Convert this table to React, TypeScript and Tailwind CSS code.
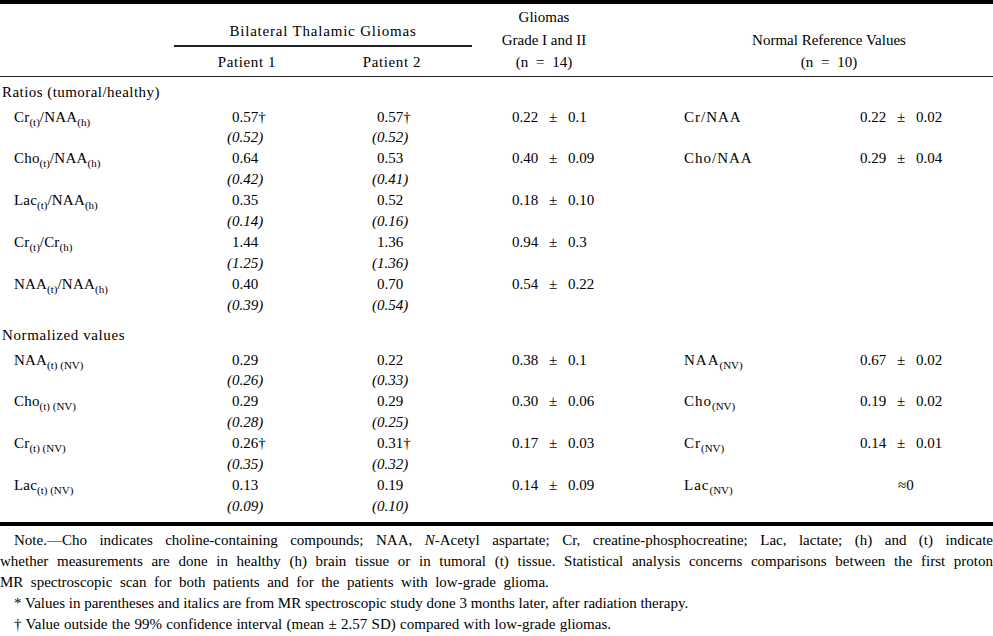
import React from "react";

const Sub = ({ children }: { children: React.ReactNode }) => (
  <sub className="text-[11px] bottom-[-4px] tracking-normal">{children}</sub>
);

type Row = {
  label: React.ReactNode;
  p1: string;
  p1i: string;
  p2: string;
  p2i: string;
  g: string;
  nl?: React.ReactNode;
  nv?: string;
  nvApprox?: boolean;
};

const ratios: Row[] = [
  {
    label: (
      <>
        Cr<Sub>(t)</Sub>/NAA<Sub>(h)</Sub>
      </>
    ),
    p1: "0.57†",
    p1i: "(0.52)",
    p2: "0.57†",
    p2i: "(0.52)",
    g: "0.22 ± 0.1",
    nl: "Cr/NAA",
    nv: "0.22 ± 0.02",
  },
  {
    label: (
      <>
        Cho<Sub>(t)</Sub>/NAA<Sub>(h)</Sub>
      </>
    ),
    p1: "0.64",
    p1i: "(0.42)",
    p2: "0.53",
    p2i: "(0.41)",
    g: "0.40 ± 0.09",
    nl: "Cho/NAA",
    nv: "0.29 ± 0.04",
  },
  {
    label: (
      <>
        Lac<Sub>(t)</Sub>/NAA<Sub>(h)</Sub>
      </>
    ),
    p1: "0.35",
    p1i: "(0.14)",
    p2: "0.52",
    p2i: "(0.16)",
    g: "0.18 ± 0.10",
  },
  {
    label: (
      <>
        Cr<Sub>(t)</Sub>/Cr<Sub>(h)</Sub>
      </>
    ),
    p1: "1.44",
    p1i: "(1.25)",
    p2: "1.36",
    p2i: "(1.36)",
    g: "0.94 ± 0.3",
  },
  {
    label: (
      <>
        NAA<Sub>(t)</Sub>/NAA<Sub>(h)</Sub>
      </>
    ),
    p1: "0.40",
    p1i: "(0.39)",
    p2: "0.70",
    p2i: "(0.54)",
    g: "0.54 ± 0.22",
  },
];

const normalized: Row[] = [
  {
    label: (
      <>
        NAA<Sub>(t) (NV)</Sub>
      </>
    ),
    p1: "0.29",
    p1i: "(0.26)",
    p2: "0.22",
    p2i: "(0.33)",
    g: "0.38 ± 0.1",
    nl: (
      <>
        NAA<Sub>(NV)</Sub>
      </>
    ),
    nv: "0.67 ± 0.02",
  },
  {
    label: (
      <>
        Cho<Sub>(t) (NV)</Sub>
      </>
    ),
    p1: "0.29",
    p1i: "(0.28)",
    p2: "0.29",
    p2i: "(0.25)",
    g: "0.30 ± 0.06",
    nl: (
      <>
        Cho<Sub>(NV)</Sub>
      </>
    ),
    nv: "0.19 ± 0.02",
  },
  {
    label: (
      <>
        Cr<Sub>(t) (NV)</Sub>
      </>
    ),
    p1: "0.26†",
    p1i: "(0.35)",
    p2: "0.31†",
    p2i: "(0.32)",
    g: "0.17 ± 0.03",
    nl: (
      <>
        Cr<Sub>(NV)</Sub>
      </>
    ),
    nv: "0.14 ± 0.01",
  },
  {
    label: (
      <>
        Lac<Sub>(t) (NV)</Sub>
      </>
    ),
    p1: "0.13",
    p1i: "(0.09)",
    p2: "0.19",
    p2i: "(0.10)",
    g: "0.14 ± 0.09",
    nl: (
      <>
        Lac<Sub>(NV)</Sub>
      </>
    ),
    nv: "≈0",
    nvApprox: true,
  },
];

function DataRow({ r }: { r: Row }) {
  return (
    <div className="flex leading-[20.9px]">
      <div className="w-[174px] pl-[14px] whitespace-nowrap tracking-[0.2px]">{r.label}</div>
      <div className="w-[148px] pl-[53px]">
        <div className="pl-[5px]">{r.p1}</div>
        <div className="italic">{r.p1i}</div>
      </div>
      <div className="w-[150px] pl-[50px]">
        <div className="pl-[5px]">{r.p2}</div>
        <div className="italic">{r.p2i}</div>
      </div>
      <div className="w-[212px] pl-[40px] whitespace-nowrap [word-spacing:7px]">{r.g}</div>
      <div className="w-[176px] whitespace-nowrap tracking-[1px]">{r.nl}</div>
      <div className={"flex-1 whitespace-nowrap [word-spacing:7px] " + (r.nvApprox ? "pl-[38px]" : "")}>{r.nv}</div>
    </div>
  );
}

export default function App() {
  return (
    <div
      className="w-[993px] h-[636px] bg-white text-black text-[15px] overflow-hidden"
      style={{ fontFamily: '"Liberation Serif", "Times New Roman", serif' }}
    >
      <div className="h-[4px] bg-black" />
      {/* header */}
      <div className="flex border-b border-[#222] pt-[2px] pb-[2px]">
        <div className="w-[174px]" />
        <div className="w-[298px] flex flex-col">
          <div className="text-center leading-[22px] pt-[14px] tracking-[0.8px]">Bilateral Thalamic Gliomas</div>
          <div className="h-[2px] bg-[#222] mt-[3px]" />
          <div className="flex leading-[22px] mt-[4px] tracking-[0.6px]">
            <div className="w-[146px] text-center">Patient 1</div>
            <div className="w-[144px] text-center">Patient 2</div>
          </div>
        </div>
        <div className="w-[144px] text-center leading-[22.5px]">
          <div>Gliomas</div>
          <div>Grade I and II</div>
          <div className="[word-spacing:4px]">(n = 14)</div>
        </div>
        <div className="flex-1 pl-[49px] flex flex-col justify-end text-center leading-[22.5px]">
          <div>Normal Reference Values</div>
          <div className="[word-spacing:4px]">(n = 10)</div>
        </div>
      </div>
      {/* body */}
      <div className="pt-[5px] leading-[21px] pl-[2px] tracking-[0.45px]">Ratios (tumoral/healthy)</div>
      <div className="flex flex-col mt-[4px]">
        {ratios.map((r, i) => (
          <DataRow key={i} r={r} />
        ))}
      </div>
      <div className="mt-[9px] leading-[21px] pl-[2px] tracking-[0.6px]">Normalized values</div>
      <div className="flex flex-col mt-[4px]">
        {normalized.map((r, i) => (
          <DataRow key={i} r={r} />
        ))}
      </div>
      <div className="h-[4px] bg-black mt-[5px]" />
      {/* notes */}
      <div className="mt-[4px] leading-[21px]">
        <div className="pl-[14px] text-justify [text-align-last:justify] whitespace-nowrap">
          Note.—Cho indicates choline-containing compounds; NAA, <i>N</i>-Acetyl aspartate; Cr, creatine-phosphocreatine; Lac, lactate; (h) and (t) indicate
        </div>
        <div className="text-justify [text-align-last:justify]">
          whether measurements are done in healthy (h) brain tissue or in tumoral (t) tissue. Statistical analysis concerns comparisons between the first proton
        </div>
        <div className="[word-spacing:3.7px]">MR spectroscopic scan for both patients and for the patients with low-grade glioma.</div>
        <div className="pl-[14px]">* Values in parentheses and italics are from MR spectroscopic study done 3 months later, after radiation therapy.</div>
        <div className="pl-[14px] [word-spacing:0.6px]">† Value outside the 99% confidence interval (mean ± 2.57 SD) compared with low-grade gliomas.</div>
      </div>
    </div>
  );
}
